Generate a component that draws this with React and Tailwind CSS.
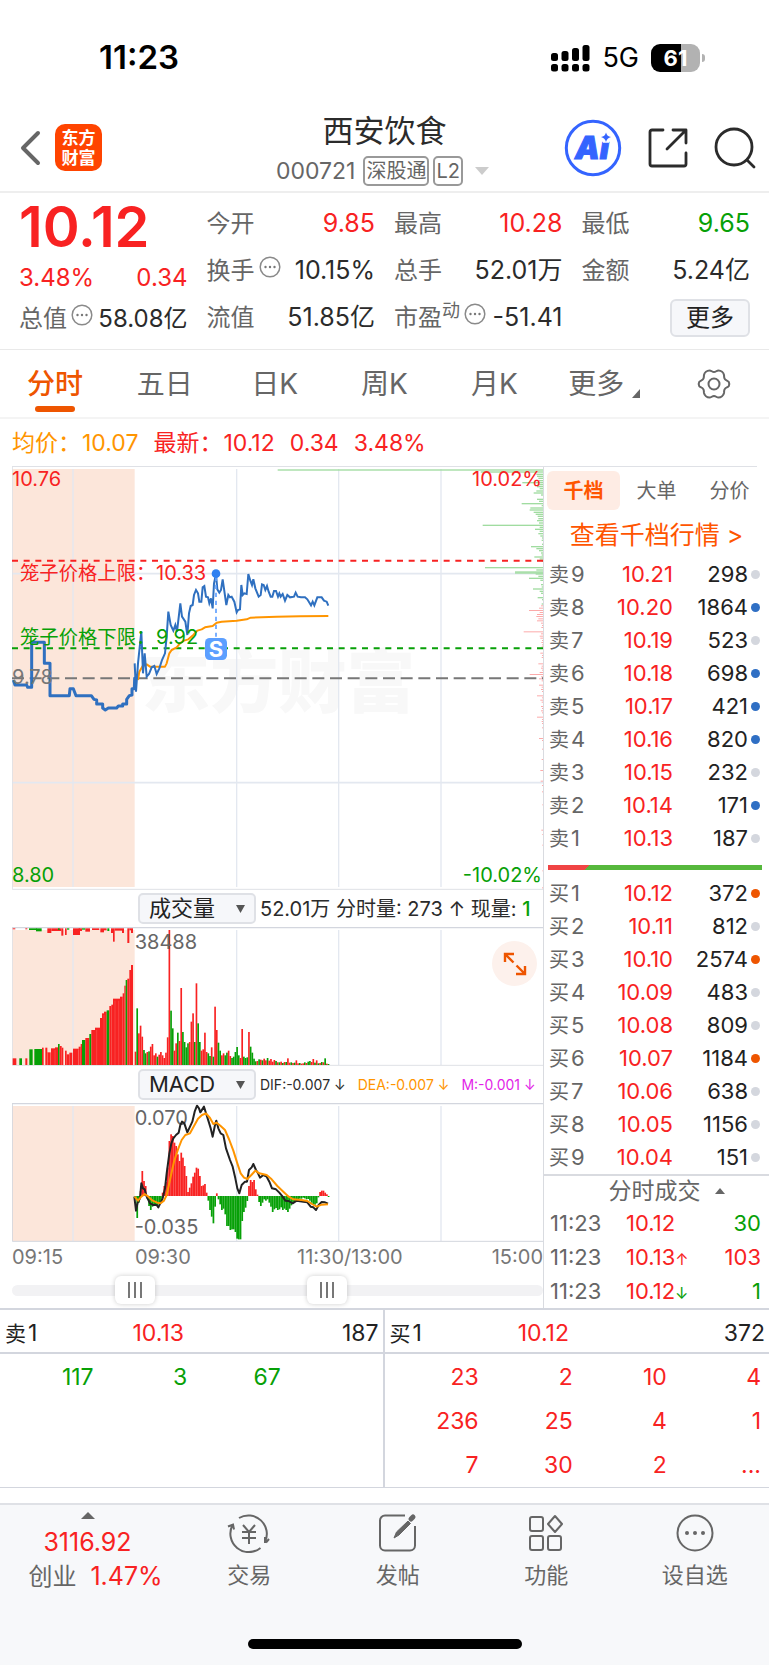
import React, {useState} from "react";
import clsx from "clsx";

const sells = [
  [9, "10.21", 298, "gray"],
  [8, "10.20", 1864, "blue"],
  [7, "10.19", 523, "gray"],
  [6, "10.18", 698, "blue"],
  [5, "10.17", 421, "blue"],
  [4, "10.16", 820, "blue"],
  [3, "10.15", 232, "gray"],
  [2, "10.14", 171, "blue"],
  [1, "10.13", 187, "gray"],
];

const buys = [
  [1, "10.12", 372, "orange"],
  [2, "10.11", 812, "gray"],
  [3, "10.10", 2574, "orange"],
  [4, "10.09", 483, "gray"],
  [5, "10.08", 809, "gray"],
  [6, "10.07", 1184, "orange"],
  [7, "10.06", 638, "gray"],
  [8, "10.05", 1156, "gray"],
  [9, "10.04", 151, "gray"],
];

const dotColors = {
  gray: "bg-[#d4d7de]",
  blue: "bg-[#2f6fc4]",
  orange: "bg-[#ee5500]",
};

const tabs = ["分时", "五日", "日K", "周K", "月K"];

const pricePoints =
  "404,640 408,725 414,640 424,545 429,670 434,610 440,680 447,672 455,652 463,648 470,672 478,655 486,630 495,610 500,560 505,485 512,525 520,542 526,525 531,545 541,460 546,500 556,515 562,555 567,490 572,468 578,465 582,435 588,420 594,430 598,455 604,455 608,412 613,408 618,440 624,442 628,460 633,445 638,475 642,400 648,372 652,418 658,428 663,420 668,388 674,430 679,465 685,435 690,442 695,440 703,455 710,487 714,480 720,478 724,405 728,435 733,430 740,432 745,372 751,392 756,405 760,388 766,415 776,440 782,435 786,403 791,405 796,420 801,408 806,425 812,440 817,440 822,423 828,423 834,440 838,430 842,440 848,432 855,452 862,435 870,442 882,440 887,428 893,440 903,442 915,442 922,448 933,466 938,455 943,466 952,442 965,442 972,452 980,455 985,467";

const auctionPoints =
  "40,690 45,705 80,705 83,712 95,712 95,577 133,577 133,640 150,640 150,737 208,737 210,716 220,716 228,737 274,737 282,748 290,750 290,762 308,762 308,774 316,780 325,774 350,774 355,768 368,768 368,762 380,762 380,748 388,737 396,735 396,716 403,716 404,685 410,685";

const averagePoints =
  "414,690 418,665 428,648 440,643 450,650 495,650 500,640 508,610 515,600 530,592 540,580 552,572 565,568 580,555 592,542 605,538 615,532 638,528 650,518 665,515 710,512 740,508 752,503 830,500 900,499 985,498";

// [y, length] of the resting orders drawn along the right edge
const askDepth = [
  [59, 796], [65, 187], [72, 20], [78, 18], [84, 14], [91, 12], [97, 62], [103, 16], [109, 18], [115, 10],
  [122, 20], [128, 28], [134, 6], [147, 18], [153, 12], [160, 64], [166, 4], [173, 38], [179, 40], [186, 28],
  [192, 22], [198, 16], [205, 14], [211, 18], [218, 12], [225, 181], [231, 10], [237, 24], [243, 10], [250, 14],
  [257, 8], [263, 3], [270, 4], [282, 3], [289, 36], [295, 20], [301, 12], [308, 6], [314, 4], [320, 26], [326, 10],
  [333, 4], [352, 174], [359, 20], [365, 84], [368, 84], [371, 22], [378, 14], [384, 42], [390, 8], [403, 6], [410, 4],
  [416, 30], [423, 10], [429, 6], [442, 16], [448, 3], [461, 4],
];
const bidDepth = [
  [467, 6], [474, 12], [481, 42], [487, 10], [493, 18], [499, 20], [506, 14], [512, 18], [519, 6], [526, 3], [532, 5],
  [545, 58], [551, 6], [558, 10], [564, 8], [571, 3], [577, 5], [584, 3], [590, 4], [609, 8], [616, 3], [622, 4],
  [641, 14], [648, 4], [654, 6], [660, 3], [667, 10], [673, 40], [680, 6], [686, 12], [692, 4], [705, 12], [711, 4],
  [718, 6], [724, 3], [737, 18], [743, 3], [750, 8], [756, 4], [769, 6], [775, 3], [782, 6], [788, 3], [801, 18],
  [808, 3], [814, 4], [820, 3], [833, 3], [865, 12], [871, 3], [897, 3], [928, 4], [961, 8], [993, 7], [1006, 3],
  [1025, 3], [1064, 2], [1140, 5], [1153, 2], [1185, 2], [1262, 2], [1313, 3],
];

// [left, right, top, colour] of the call auction volume
const auctionVolume = [
  [38, 49, 535, "r"], [58, 66, 535, "g"], [76, 82, 535, "r"], [88, 98, 508, "g"], [103, 126, 507, "g"],
  [126, 131, 503, "r"], [136, 142, 503, "r"], [142, 152, 517, "r"], [153, 165, 505, "r"], [165, 174, 502, "r"],
  [174, 179, 492, "g"], [179, 185, 498, "r"], [185, 190, 503, "r"], [195, 200, 512, "r"], [200, 208, 523, "r"],
  [208, 217, 518, "r"], [219, 236, 506, "r"], [236, 242, 500, "r"], [242, 246, 492, "r"], [246, 256, 480, "g"],
  [256, 268, 474, "r"], [268, 274, 462, "g"], [274, 285, 450, "r"], [285, 300, 443, "r"], [300, 306, 414, "r"],
  [306, 312, 400, "r"], [312, 320, 395, "r"], [320, 328, 391, "g"], [328, 334, 378, "r"], [334, 339, 374, "r"],
  [339, 360, 356, "r"], [360, 368, 350, "r"], [368, 373, 340, "r"], [373, 377, 317, "r"], [377, 382, 300, "g"],
  [382, 388, 296, "r"], [388, 393, 270, "r"], [393, 399, 255, "r"],
];
const auctionUnmatched = [
  [38, 46, 3, "r"], [76, 82, 3, "r"], [87, 110, 5, "g"], [108, 125, 9, "g"], [142, 154, 14, "r"], [154, 184, 8, "r"],
  [174, 179, 5, "g"], [184, 190, 22, "r"], [195, 200, 20, "r"], [201, 208, 4, "g"], [219, 240, 20, "r"],
  [236, 246, 8, "r"], [246, 256, 4, "g"], [256, 270, 10, "r"], [276, 298, 5, "r"], [301, 312, 12, "r"],
  [312, 320, 6, "r"], [322, 328, 8, "g"], [333, 339, 14, "r"], [339, 344, 40, "r"], [344, 366, 7, "r"],
  [366, 372, 14, "r"], [382, 388, 44, "r"], [388, 393, 6, "r"], [393, 399, 14, "r"],
];

// one value per minute: above zero is an up bar, below zero a down bar
const volume = [
  40, -170, 95, 118, 85, -45, -35, 39, -41, 55, 63, 29, 35, -25, 31, 39, 29, 21, 37, 83, 405, -163, -110, 43, 65,
  -97, 72, 231, -99, -69, -53, -65, 69, 130, 155, -69, 245, -125, -69, 43, 47, 97, 39, -35, -27, 53, -25, 175, 105,
  -67, -43, 29, 35, -29, -37, 43, 27, -21, -25, -39, -54, -29, 21, 108, -25, -21, -23, 99, -55, -37, -19, -11, 12,
  -17, 16, -14, 19, 14, -21, 13, 18, 10, 15, -12, 8, -8, 10, -6, 9, -9, 20, 7, -8, 6, -7, 14, 5, -6, 4, 5, -8, 6,
  -10, -12, 9, 18, -7, 14, -5, 6, -9, 8, -20, 4, -3,
];
const macd = [
  -10, -66, -20, 15, 75, 45, 30, -8, -30, -42, -32, -25, -25, -28, -22, -15, 10, 30, 42, 85, 165, 185, 180, 160,
  150, 125, 105, 130, 115, 90, 60, 12, 25, 38, 58, 70, 85, 82, 60, 30, 32, 36, 10, -14, -42, -62, -82, -32, 8, -10,
  -25, -42, -38, -55, -90, -90, -102, -100, -100, -108, -128, -130, -130, -75, -48, -35, -15, 30, 48, 42, 48, 20, 4,
  -18, -30, -20, -10, -14, -10, -20, -32, -48, -40, -36, -42, -40, -34, -42, -38, -42, -48, -38, -28, -20, -18,
  -14, -10, -8, -8, -5, -7, -10, -9, -14, -20, -24, -26, -22, -4, 12, 16, 16, 10, 5, -3,
];

const difPoints =
  "403,950 408,992 413,968 420,955 424,910 429,925 434,928 440,950 450,970 460,975 470,975 475,982 482,968 488,955 495,925 500,880 508,820 514,790 520,775 528,765 536,758 541,735 546,725 553,730 562,757 570,740 577,725 584,695 591,677 597,685 601,697 612,680 618,700 626,725 632,745 638,770 645,735 649,722 655,745 662,760 670,765 678,805 690,840 698,860 706,895 712,925 718,940 725,915 735,905 741,905 747,870 755,862 760,852 768,870 774,880 780,893 790,885 800,890 808,905 816,925 828,928 838,938 848,950 856,962 866,963 878,970 890,962 910,965 922,967 932,980 940,982 948,990 956,975 965,966 975,967 984,971";

const deaPoints =
  "404,950 414,962 424,950 434,942 445,950 458,962 472,968 482,970 492,962 500,945 512,890 522,845 534,808 545,780 556,765 570,760 582,738 594,716 606,705 618,700 630,714 640,732 650,728 662,738 675,750 688,780 700,812 712,850 722,880 732,893 742,897 754,885 766,872 778,880 800,885 815,898 832,918 850,935 866,950 880,958 905,960 922,963 936,972 950,980 965,974 984,973";

const barColor = (value) => (value === "r" || value > 0 ? "#f82222" : "#07a007");

const MoreDots = () => (
  <svg viewBox="0 0 22 22" className="w-[22px] h-[22px] shrink-0 -translate-y-1" fill="none" stroke="#8a8a8a" strokeWidth="1.5">
    <circle cx="11" cy="11" r="9.8" />
    <g fill="#777" stroke="none">
      <circle cx="6.5" cy="11" r="1.2" />
      <circle cx="11" cy="11" r="1.2" />
      <circle cx="15.5" cy="11" r="1.2" />
    </g>
  </svg>
);

const Stat = ({label, value, color, dots, sup}) => (
  <div className="h-[47px] flex items-center justify-between">
    <span className="flex items-center gap-1 text-[#666]">
      <span>
        {label}
        {sup && <sup className="text-lg leading-none">{sup}</sup>}
      </span>
      {dots && <MoreDots />}
    </span>
    <span className={clsx("text-[25px]", color || "text-[#2b2b2b]")}>{value}</span>
  </div>
);

const StatusBar = () => (
  <div className="h-[100px] pt-4 pl-[99px] pr-16 flex items-center justify-between text-black">
    <span className="text-[33px] font-semibold">11:23</span>
    <div className="flex items-center gap-3">
      <svg viewBox="0 0 39 28" className="w-[39px] h-7">
        <rect x="0" y="9" width="7" height="8" rx="2.5" />
        <rect x="10.500" y="7" width="7" height="10" rx="2.500" />
        <rect x="21" y="4" width="7" height="13" rx="2.500" />
        <rect x="31.500" y="1" width="7" height="16" rx="2.500" />
        <rect x="0" y="20" width="7" height="7.500" rx="2.500" />
        <rect x="10.500" y="20" width="7" height="7.500" rx="2.500" />
        <rect x="21" y="20" width="7" height="7.500" rx="2.500" />
        <rect x="31.500" y="20" width="7" height="7.500" rx="2.500" />
      </svg>
      <span className="text-[27px]">5G</span>
      <div className="flex items-center gap-[2px]">
        <span className="w-[49px] h-7 rounded-[9px] bg-[linear-gradient(90deg,#000_62%,#b2b2b2_62%)] text-white text-[22px] leading-7 font-bold text-center">
          61
        </span>
        <span className="w-[3px] h-2 rounded-r-full bg-[#b2b2b2]" />
      </div>
    </div>
  </div>
);

const Header = () => (
  <header className="h-[93px] pt-1 border-b-2 border-[#eee] px-[13px] grid grid-cols-[1fr_auto_1fr] items-center">
    <div className="flex items-center gap-3 pl-[6px]">
      <button type="button" aria-label="返回">
        <svg viewBox="0 0 24 38" className="w-6 h-[38px]" fill="none" stroke="#666" strokeWidth="4" strokeLinecap="round" strokeLinejoin="round">
          <path d="M19 4 4 19l15 15" />
        </svg>
      </button>
      <div className="w-[47px] h-[47px] rounded-[10px] bg-[#ff4400] text-white text-[17px] leading-5 font-bold flex flex-col items-center justify-center">
        <span>东方</span>
        <span>财富</span>
      </div>
    </div>
    <div className="flex flex-col items-center pt-1">
      <h1 className="text-[31px] leading-[42px] text-[#2b2b2b]">西安饮食</h1>
      <div className="pr-1 flex items-center gap-1 text-[23px] leading-[38px] text-[#666]">
        <span className="pr-1">000721</span>
        <span className="h-[30px] px-px border-2 border-[#999] rounded-[5px] text-[20px] leading-[26px]">深股通</span>
        <span className="h-[30px] px-px border-2 border-[#999] rounded-[5px] text-[20px] leading-[26px]">L2</span>
        <svg viewBox="0 0 14 8" className="w-[14px] h-2 ml-2" fill="#ccc">
          <path d="M0 0h14L7 8z" />
        </svg>
      </div>
    </div>
    <div className="flex items-center justify-end gap-[26px]">
      <button type="button" aria-label="AI">
        <svg viewBox="0 0 58 58" className="w-[58px] h-[58px]">
          <circle cx="29" cy="29" r="26.700" fill="none" stroke="#3464ff" strokeWidth="3" />
          <text x="11" y="40" fontSize="31" fontWeight="900" fontStyle="italic" fill="#3464ff" stroke="#3464ff" strokeWidth="1">
            Ai
          </text>
          <path d="M42 13.500 q1 4 5 4.500 q-4 1 -5 5 q-1 -4 -5 -5 q4 -.5 5 -4.500z" fill="#3464ff" stroke="#fff" strokeWidth="6" paintOrder="stroke" />
        </svg>
      </button>
      <button type="button" aria-label="分享">
        <svg viewBox="0 0 40 40" className="w-10 h-10" fill="none" stroke="#2b2b2b" strokeWidth="2.800" strokeLinecap="round" strokeLinejoin="round">
          <path d="M15 2H4a2 2 0 0 0-2 2v32a2 2 0 0 0 2 2h32a2 2 0 0 0 2-2V25" />
          <path d="M25 2h13v13M38 2 19 21" />
        </svg>
      </button>
      <button type="button" aria-label="搜索">
        <svg viewBox="0 0 42 42" className="w-[42px] h-[42px]" fill="none" stroke="#2b2b2b" strokeWidth="2.800" strokeLinecap="round">
          <circle cx="20" cy="20" r="18" />
          <path d="M33 33l7 7" />
        </svg>
      </button>
    </div>
  </header>
);

const Quote = () => (
  <section className="grid grid-cols-4 gap-x-[19px] px-[19px] pt-[7px] pb-2 border-b border-[#e9e9e9] text-2xl">
    <div>
      <div className="h-[55px] flex items-center text-[56px] font-semibold text-[#f82222]">10.12</div>
      <div className="h-[46px] flex items-center justify-between text-[#f82222]">
        <span>3.48%</span>
        <span>0.34</span>
      </div>
      <div className="h-9 flex items-center justify-between whitespace-nowrap">
        <span className="flex items-center gap-1 text-[#666]">
          总值
          <MoreDots />
        </span>
        <span className="text-[#2b2b2b]">58.08亿</span>
      </div>
    </div>
    <div>
      <Stat label="今开" value="9.85" color="text-[#f82222]" />
      <Stat label="换手" value="10.15%" dots />
      <Stat label="流值" value="51.85亿" />
    </div>
    <div className="whitespace-nowrap">
      <Stat label="最高" value="10.28" color="text-[#f82222]" />
      <Stat label="总手" value="52.01万" />
      <Stat label="市盈" sup="动" value="-51.41" dots />
    </div>
    <div>
      <Stat label="最低" value="9.65" color="text-[#07a007]" />
      <Stat label="金额" value="5.24亿" />
      <div className="h-[47px] flex items-center justify-end">
        <button type="button" className="w-20 h-[38px] border-2 border-[#dfe1e6] rounded-md bg-[#f6f7fa] leading-8 text-[#222]">
          更多
        </button>
      </div>
    </div>
  </section>
);

const PeriodTabs = () => {
  const [active, setActive] = useState("分时");

  return (
    <nav className="h-[69px] grid grid-cols-7 border-b-2 border-[#f4f4f4] text-[28px] text-[#666]">
      {tabs.map((tab) => (
        <button
          key={tab}
          type="button"
          onClick={() => setActive(tab)}
          className={clsx("relative", active === tab && "text-[#ee5500] font-medium")}>
          {tab}
          {active === tab && <span className="absolute bottom-[5px] left-1/2 -translate-x-1/2 w-10 h-[6px] rounded-full bg-[#ee5500]" />}
        </button>
      ))}
      <button type="button" className="flex items-center justify-center gap-2">
        更多
        <svg viewBox="0 0 8 9" className="w-2 h-[9px] mt-5" fill="#666">
          <path d="M8 0v9H0z" />
        </svg>
      </button>
      <button type="button" aria-label="设置" className="flex items-center justify-center">
        <svg viewBox="0 0 34 32" className="w-[34px] h-8" fill="none" stroke="#666" strokeWidth="2" strokeLinejoin="round">
          <path d="M12.500 2.500c2 0 2.500 1.500 4.500 1.500s2.500-1.500 4.500-1.500c2.500 0 5 2 5.500 4.500.3 2-.2 2.500.8 4 1 1.600 3.200 1.500 4 3 .6 1.200.6 2.800 0 4-.8 1.500-3 1.400-4 3-1 1.500-.5 2-.8 4-.5 2.500-3 4.500-5.500 4.500-2 0-2.500-1.500-4.500-1.500s-2.500 1.500-4.500 1.500c-2.500 0-5-2-5.500-4.500-.3-2 .2-2.500-.8-4-1-1.600-3.200-1.500-4-3-.6-1.200-.6-2.800 0-4 .8-1.500 3-1.400 4-3 1-1.500.5-2 .8-4 .5-2.500 3-4.500 5.500-4.500z" />
          <circle cx="17" cy="16" r="5.500" />
        </svg>
      </button>
    </nav>
  );
};

// The charts share one horizontal scale of three units to a pixel
const GridLines = ({top, bottom}) => (
  <g>
    <rect x="36" y={top} width="368" height={bottom - top} fill="#fce6da" />
    <path d={`M219 ${top}V${bottom}M710 ${top}V${bottom}M1016 ${top}V${bottom}M1323 ${top}V${bottom}`} stroke="#e3e8f0" strokeWidth="4" />
  </g>
);

const PriceChart = () => (
  <svg viewBox="36 51 1593 1269" className="block w-full" fontSize="60">
    <text x="425" y="772" fontSize="205" fontWeight="900" fill="#f8f8f8">
      东方财富
    </text>
    <GridLines top={57} bottom={1311} />
    <path d="M36 371H1629M36 998H1629" stroke="#e3e8f0" strokeWidth="5" />
    <path d="M37 51V1318H1629" fill="none" stroke="#dfe1e6" strokeWidth="3" />
    {askDepth.map(([y, length]) => (
      <rect key={y} x={1629 - length} y={y - 1} width={length} height="4" fill="#a0dca0" />
    ))}
    {bidDepth.map(([y, length]) => (
      <rect key={y} x={1629 - length} y={y - 1} width={length} height="3" fill="#fcaaaa" />
    ))}
    <path d="M36 332H1629" stroke="#f82222" strokeWidth="6" strokeDasharray="18 17" />
    <path d="M36 595H1629" stroke="#07a007" strokeWidth="6" strokeDasharray="18 17" />
    <path d="M36 685H1629" stroke="#777" strokeWidth="6" strokeDasharray="36 17" />
    <g fill="none" strokeLinejoin="round">
      <polyline points={averagePoints} stroke="#ff9500" strokeWidth="6" />
      <polyline points={auctionPoints} stroke="#2f70c0" strokeWidth="9" />
      <polyline points={pricePoints} stroke="#2f70c0" strokeWidth="6" strokeLinejoin="miter" />
    </g>
    <text x="36" y="107" fill="#f82222">10.76</text>
    <text x="1626" y="107" fill="#f82222" textAnchor="end">10.02%</text>
    <text x="60" y="390" fontSize="58" fill="#f82222">笼子价格上限：</text>
    <text x="468" y="390" fill="#f82222">10.33</text>
    <text x="60" y="581" fontSize="58" fill="#07a007">笼子价格下限：</text>
    <text x="468" y="581" fill="#07a007">9.92</text>
    <text x="36" y="702" fill="#777">9.78</text>
    <text x="36" y="1296" fill="#07a007">8.80</text>
    <text x="1626" y="1296" fill="#07a007" textAnchor="end">-10.02%</text>
    <path d="M648 380V560" stroke="#60a0ff" strokeWidth="5" strokeDasharray="13 11" />
    <circle cx="648" cy="371" r="13" fill="#2f80f0" />
    <rect x="615" y="564" width="66" height="66" rx="14" fill="#5c9fff" />
    <text x="648" y="620" fontSize="66" fontWeight="700" fill="#fff" textAnchor="middle">S</text>
  </svg>
);

const VolumeChart = () => (
  <svg viewBox="36 141 1593 417" className="block w-full" fontSize="60">
    <GridLines top={150} bottom={555} />
    <path d="M36 143H1629" stroke="#d3d6de" strokeWidth="4" />
    <path d="M37 143V556H1629" fill="none" stroke="#dfe1e6" strokeWidth="3" />
    {auctionUnmatched.map(([left, right, length, color]) => (
      <rect key={left} x={left} y="145" width={right - left} height={length} fill={barColor(color)} />
    ))}
    {auctionVolume.map(([left, right, top, color]) => (
      <rect key={left} x={left} y={top} width={right - left} height={555 - top} fill={barColor(color)} />
    ))}
    <path d="M142 520V555M165 510V555M236 510V555M290 450V555M312 405V555M345 362V555M356 362V555" stroke="#fa8a84" strokeWidth="1" />
    {volume.map((value, i) => (
      <rect key={i} x={404 + i * 5.08} y={555 - Math.abs(value)} width="5" height={Math.abs(value)} fill={barColor(value)} />
    ))}
    <text x="404" y="207" fill="#666">38488</text>
  </svg>
);

const MacdChart = () => (
  <svg viewBox="36 669 1593 417" className="block w-full" fontSize="60">
    <GridLines top={678} bottom={1083} />
    <path d="M36 671H1629" stroke="#d3d6de" strokeWidth="4" />
    <path d="M37 671V1084H1629" fill="none" stroke="#d3d6de" strokeWidth="3" />
    <text x="404" y="735" fill="#666">0.070</text>
    <text x="404" y="1063" fill="#666">-0.035</text>
    {macd.map((value, i) => (
      <rect key={i} x={404 + i * 5.08} y={value > 0 ? 948 - value : 948} width="5.200" height={Math.abs(value)} fill={barColor(value)} />
    ))}
    <g fill="none" strokeWidth="6" strokeLinejoin="round">
      <polyline points={difPoints} stroke="#222" />
      <polyline points={deaPoints} stroke="#ff9500" />
    </g>
  </svg>
);

const IndicatorSelect = ({label, options}) => (
  <div className="relative ml-[126px] mr-1 shrink-0">
    <select
      aria-label={label}
      className="appearance-none w-[118px] h-[31px] pl-[9px] border-2 border-[#dfe1e6] rounded-[5px] bg-[#f6f7fa] text-[22px] leading-[27px] text-[#222]">
      {options.map((option) => (
        <option key={option}>{option}</option>
      ))}
    </select>
    <svg viewBox="0 0 9 8" className="absolute right-[11px] top-3 w-[9px] h-2 pointer-events-none" fill="#555">
      <path d="M0 0h9L4.500 8z" />
    </svg>
  </div>
);

const thumbClass =
  "col-start-1 row-start-1 w-full h-7 appearance-none bg-transparent pointer-events-none [&::-webkit-slider-thumb]:appearance-none [&::-webkit-slider-thumb]:pointer-events-auto [&::-webkit-slider-thumb]:w-10 [&::-webkit-slider-thumb]:h-7 [&::-webkit-slider-thumb]:rounded-md [&::-webkit-slider-thumb]:shadow-[0_0_5px_rgba(0,0,0,0.2)] [&::-webkit-slider-thumb]:bg-white [&::-webkit-slider-thumb]:bg-[repeating-linear-gradient(90deg,#777_0_2px,#fff_2px_6px)] [&::-webkit-slider-thumb]:bg-[length:14px_16px] [&::-webkit-slider-thumb]:bg-center [&::-webkit-slider-thumb]:bg-no-repeat";

const RangeSlider = () => {
  const [start, setStart] = useState(21);
  const [end, setEnd] = useState(60);

  return (
    <div className="h-9 grid items-center">
      <div className="col-start-1 row-start-1 h-[11px] rounded-full bg-[#f2f2f4]" />
      <input type="range" aria-label="开始时间" value={start} onChange={(e) => setStart(Number(e.target.value))} className={thumbClass} />
      <input type="range" aria-label="结束时间" value={end} onChange={(e) => setEnd(Number(e.target.value))} className={thumbClass} />
    </div>
  );
};

const Charts = () => (
  <div className="flex-1 min-w-0 pl-3">
    <PriceChart />
    <div className="h-[37px] flex items-center text-xl text-[#2b2b2b] whitespace-nowrap">
      <IndicatorSelect label="成交指标" options={["成交量", "成交额"]} />
      <span>
        52.01万 分时量: 273 ↑ 现量: <span className="text-[#07a007] font-medium">1</span>
      </span>
    </div>
    <div className="relative">
      <VolumeChart />
      <button type="button" aria-label="全屏" className="absolute right-[6px] top-[14px] w-[45px] h-[45px] rounded-full bg-[#fdf1ec] flex items-center justify-center">
        <svg viewBox="0 0 24 24" className="w-6 h-6" fill="none" stroke="#ee5500" strokeWidth="2.400">
          <path d="M2 10V2h9M2.500 2.500l8 8M22 14v8h-9M21.500 21.500l-8-8" />
        </svg>
      </button>
    </div>
    <div className="h-[37px] flex items-center text-sm whitespace-nowrap">
      <IndicatorSelect label="技术指标" options={["MACD", "KDJ", "RSI"]} />
      <span className="text-[#2b2b2b]">DIF:-0.007 ↓</span>
      <span className="pl-3 text-[#ff9500]">DEA:-0.007 ↓</span>
      <span className="pl-3 text-[#e31fe8]">M:-0.001 ↓</span>
    </div>
    <MacdChart />
    <div className="h-[30px] grid grid-cols-[123fr_162fr_123fr_123fr] items-center text-xl text-[#777]">
      <span>09:15</span>
      <span>09:30</span>
      <span>11:30/13:00</span>
      <span className="text-right">15:00</span>
    </div>
    <RangeSlider />
  </div>
);

const OrderRows = ({side, rows}) => (
  <table className="w-full text-[22px] leading-[33px]">
    <tbody>
      {rows.map(([level, price, amount, dot]) => (
        <tr key={level} className="h-[33px]">
          <th scope="row" className="w-[40px] p-0 pl-[5px] text-left font-normal text-[#666] whitespace-nowrap">
            <span className="text-xl">{side}</span>
            <span className="pl-[2px]">{level}</span>
          </th>
          <td className="p-0 text-right text-[#f82222]">{price}</td>
          <td className="w-[75px] p-0 text-right text-[#222]">{amount}</td>
          <td className="w-[21px] p-0 pl-[3px]">
            <span className={clsx("block w-[9px] h-[9px] rounded-full", dotColors[dot])} />
          </td>
        </tr>
      ))}
    </tbody>
  </table>
);

const OrderBook = () => (
  <aside className="w-[226px] shrink-0 border-l border-[#d9dbe0] flex flex-col">
    <div className="mt-1 mx-[3px] h-[39px] flex text-xl text-[#666]">
      <button type="button" className="w-[73px] rounded-md bg-[#feece4] text-[#ff5500] font-bold">千档</button>
      <button type="button" className="flex-1">大单</button>
      <button type="button" className="flex-1">分价</button>
    </div>
    <a href="#depth" className="h-12 pt-1 flex items-center justify-center text-[25px] text-[#ff5500]">
      查看千档行情 &gt;
    </a>
    <OrderRows side="卖" rows={sells} />
    <div className="mt-[10px] mb-[7px] ml-1 mr-[7px] h-[5px] bg-[linear-gradient(135deg,#f04444_19%,#56b83c_19%)]" />
    <OrderRows side="买" rows={buys} />
    <div className="h-8 border-t-2 border-[#d9dbe0] pl-5 flex items-center justify-center gap-[14px] text-[23px] text-[#666]">
      分时成交
      <svg viewBox="0 0 10 6" className="w-[10px] h-[6px]" fill="#666">
        <path d="M0 6h10L5 0z" />
      </svg>
    </div>
    <table className="w-full text-[22px] text-[#666]">
      <tbody>
        <tr className="h-[34px]">
          <td className="w-[82px] p-0 pl-[6px]">11:23</td>
          <td className="p-0 text-[#f82222]">10.12</td>
          <td className="p-0 pr-2 text-right text-[#07a007]">30</td>
        </tr>
        <tr className="h-[34px]">
          <td className="p-0 pl-[6px]">11:23</td>
          <td className="p-0 text-[#f82222]">10.13<span className="text-base">↑</span></td>
          <td className="p-0 pr-2 text-right text-[#f82222]">103</td>
        </tr>
        <tr className="h-[34px]">
          <td className="p-0 pl-[6px]">11:23</td>
          <td className="p-0 text-[#f82222]">10.12<span className="text-base text-[#07a007]">↓</span></td>
          <td className="p-0 pr-2 text-right text-[#07a007]">1</td>
        </tr>
      </tbody>
    </table>
  </aside>
);

const Queue = ({label, price, amount, rows, color, className}) => (
  <div className={className}>
    <div className="h-[44px] pt-1 pl-[5px] pr-1 border-b-2 border-[#d3d6de] grid grid-cols-3 items-center text-[#222]">
      <span>
        <span className="text-[21px]">{label}</span>
        <span className="pl-[2px]">1</span>
      </span>
      <span className="pl-[3px] text-[#f82222]">{price}</span>
      <span className="text-right">{amount}</span>
    </div>
    <div className="pt-px pr-2">
      <table className="w-full table-fixed">
        <tbody>
          {rows.map((row, i) => (
            <tr key={i} className="h-11">
              {row.map((cell, j) => (
                <td key={j} className={clsx("p-0 text-right", color)}>{cell}</td>
              ))}
            </tr>
          ))}
        </tbody>
      </table>
    </div>
  </div>
);

const NavItem = ({label, children}) => (
  <button type="button" className="flex-1 flex flex-col items-center gap-[6px] pt-2 text-[22px] leading-8 text-[#666]">
    <svg viewBox="0 0 44 40" className="w-11 h-10" fill="none" stroke="#666" strokeWidth="2">
      {children}
    </svg>
    {label}
  </button>
);

const BottomNav = () => (
  <footer className="border-t-2 border-[#dfe1e6] bg-[#f7f8fa]">
    <div className="flex h-[112px]">
      <button type="button" className="w-[175px] flex flex-col items-center pt-[7px] text-[25px] text-[#f82222]">
        <svg viewBox="0 0 14 7" className="w-[14px] h-[7px]" fill="#666">
          <path d="M0 7h14L7 0z" />
        </svg>
        <span className="mt-[6px] leading-[34px]">3116.92</span>
        <span className="pl-4 leading-[34px]">
          <span className="pr-[14px] text-2xl text-[#666]">创业</span>
          1.47%
        </span>
      </button>
      <NavItem label="交易">
        <path d="M12 5a18.500 18.500 0 0 1 26 24M39 29.500l3-3.500M38 30v-6M33.500 35A18.500 18.500 0 0 1 5.500 12M1 13.500l5-2 1 5" />
        <path d="M16 12l6 7 6-7M15 19h14M15 25h14M22 19v12" />
      </NavItem>
      <NavItem label="发帖">
        <path d="M29 2.500H9a5 5 0 0 0-5 5v25a5 5 0 0 0 5 5h25a5 5 0 0 0 5-5V13" />
        <path d="M18 25l2.500-6L32 8l2.500 2.500L23 22z" fill="#666" strokeWidth="1" />
        <path d="M35 6l2-2" strokeWidth="5" strokeLinecap="round" />
      </NavItem>
      <NavItem label="功能">
        <rect x="6" y="4" width="13" height="14" rx="2" />
        <rect x="6" y="23" width="13" height="14" rx="2" />
        <rect x="24" y="23" width="13" height="14" rx="2" />
        <path d="M31 3l7 8-7 8-7-8z" strokeLinejoin="round" />
      </NavItem>
      <NavItem label="设自选">
        <circle cx="22" cy="20" r="17.500" />
        <g fill="#666" stroke="none">
          <circle cx="14" cy="20" r="2" />
          <circle cx="22" cy="20" r="2" />
          <circle cx="30" cy="20" r="2" />
        </g>
      </NavItem>
    </div>
    <div className="h-12 flex justify-center pt-[22px]">
      <div className="w-[274px] h-[10px] rounded-full bg-black" />
    </div>
  </footer>
);

const App = () => (
  <div className="min-h-screen flex flex-col bg-white font-[Inter,'Noto_Sans_CJK_SC',sans-serif]">
    <StatusBar />
    <Header />
    <Quote />
    <PeriodTabs />
    <div className="h-[48px] pt-[2px] mx-3 border-b border-[#dfe1e6] flex items-center gap-[15px] text-[23px] text-[#f82222]">
      <span className="text-[#ff9500]">均价：<span className="pl-px">10.07</span></span>
      <span>最新：<span className="pl-px">10.12</span></span>
      <span>0.34</span>
      <span>3.48%</span>
    </div>
    <main className="flex">
      <Charts />
      <OrderBook />
    </main>
    <section className="grid grid-cols-2 border-t-2 border-b border-[#d3d6de] text-[23px]">
      <Queue label="卖" price="10.13" amount={187} color="text-[#07a007]" rows={[[117, 3, 67, ""]]} className="border-r-2 border-[#d3d6de]" />
      <Queue
        label="买"
        price="10.12"
        amount={372}
        color="text-[#f82222]"
        rows={[[23, 2, 10, 4], [236, 25, 4, 1], [7, 30, 2, "..."]]}
      />
    </section>
    <div className="grow" />
    <BottomNav />
  </div>
);

export default App;
